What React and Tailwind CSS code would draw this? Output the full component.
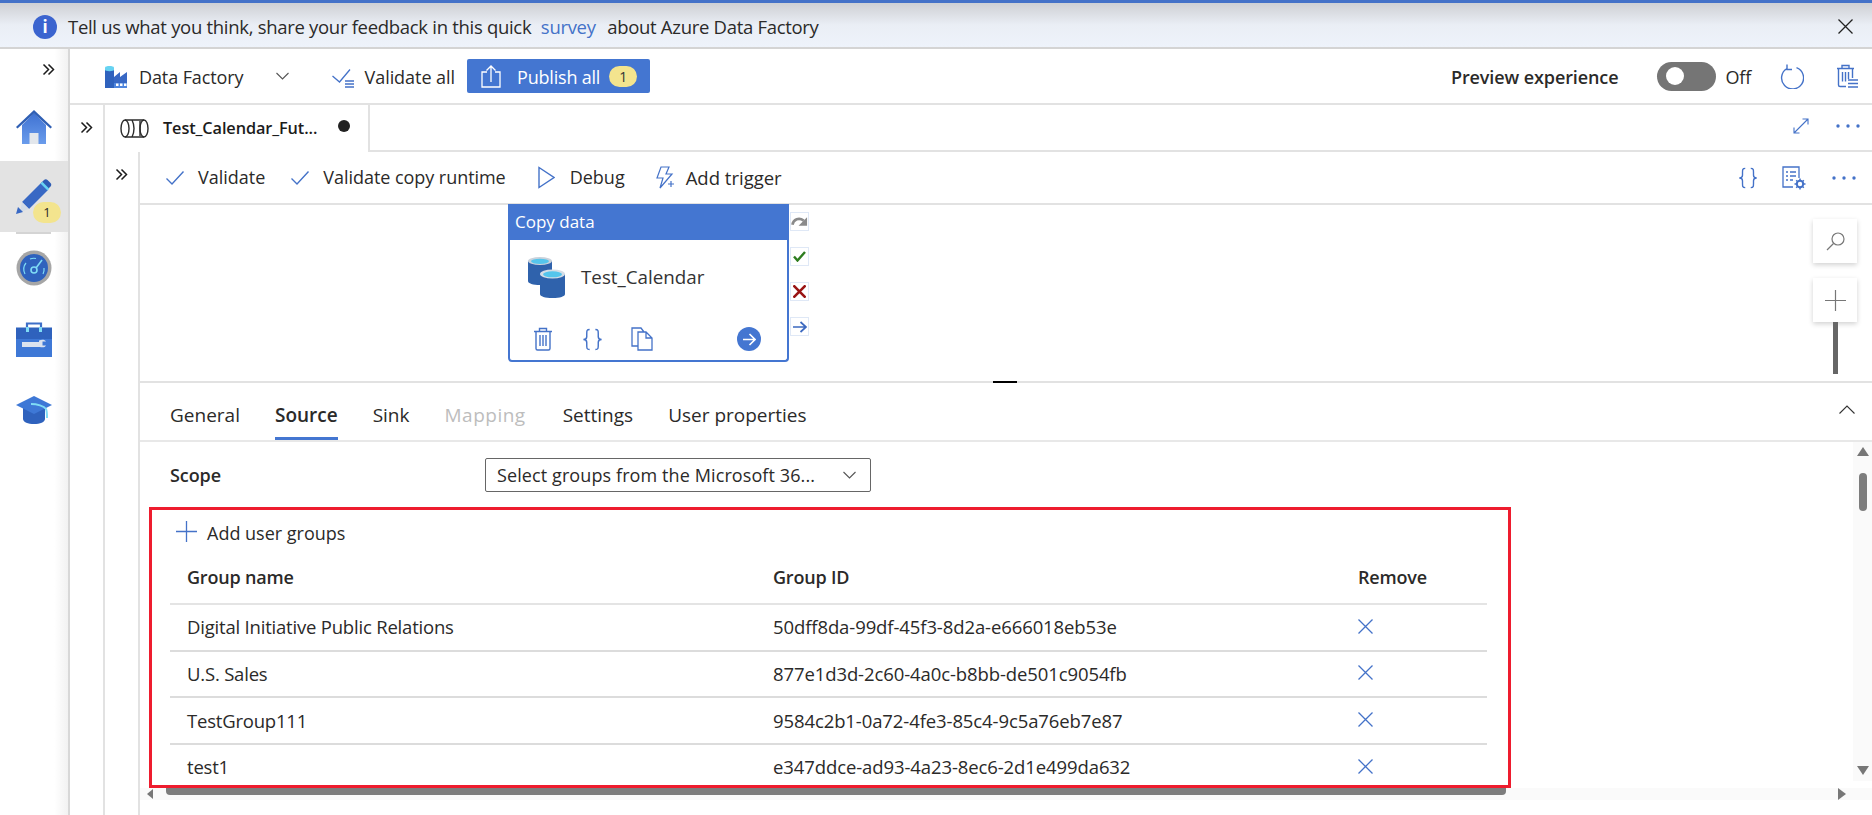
import React from 'react';

const BLUE = '#4472c8';

const Chevrons = ({ className = '' }) => (
  <svg className={className} width="13" height="13" viewBox="0 0 13 13" fill="none" stroke="#1c1c1c" strokeWidth="1.500">
    <path d="M1.500 1.500 6.500 6.500 1.500 11.500M6.500 1.500 11.500 6.500 6.500 11.500" />
  </svg>
);

const Check = () => (
  <svg width="20" height="16" viewBox="0 0 20 16" fill="none" stroke={BLUE} strokeWidth="1.400">
    <path d="M1.500 8.500 7 14 18.500 1.500" />
  </svg>
);

const Braces = ({ size = 22 }) => (
  <svg width={size} height={size} viewBox="0 0 22 24" fill="none" stroke={BLUE} strokeWidth="1.500">
    <path d="M8 1.500C5 1.500 5 3 5 6v3c0 2-1 3-3.500 3C4 12 5 13 5 15v3c0 3 0 4.500 3 4.500M14 1.500c3 0 3 1.500 3 4.500v3c0 2 1 3 3.500 3C18 12 17 13 17 15v3c0 3 0 4.500-3 4.500" />
  </svg>
);

const Dots = () => (
  <svg width="24" height="4" viewBox="0 0 24 4" fill={BLUE}>
    <circle cx="2" cy="2" r="1.700" />
    <circle cx="12" cy="2" r="1.700" />
    <circle cx="22" cy="2" r="1.700" />
  </svg>
);

const Cross = ({ size = 15, color = BLUE, width = 1.300 }) => (
  <svg width={size} height={size} viewBox="0 0 15 15" fill="none" stroke={color} strokeWidth={width}>
    <path d="M.5.5l14 14M14.500.5l-14 14" />
  </svg>
);

const TrashIcon = () => (
  <svg width="20" height="24" viewBox="0 0 20 24" fill="none" stroke={BLUE} strokeWidth="1.400">
    <path d="M1 4.500h18M6.500 4.500V1.500h7v3M3 4.500V21.500c0 1 .6 1.500 1.500 1.500h11c.9 0 1.500-.5 1.500-1.500V4.500M7 8v11M10 8v11M13 8v11" />
  </svg>
);

const TrashListIcon = () => (
  <svg width="22" height="25" viewBox="0 0 22 25" fill="none" stroke={BLUE} strokeWidth="1.400">
    <path d="M1 4.500h17M6 4.500V1.500h7v3M2.500 4.500V21c0 1 .6 1.500 1.500 1.500h6M16.500 4.500V14M6.500 8v9.500M9.500 8v9.500M12.500 8v7" />
    <path d="M12 16h10M12 19.500h10M12 23h10" strokeWidth="1.500" />
  </svg>
);

const SideHome = () => (
  <svg width="36" height="34" viewBox="0 0 36 34">
    <defs>
      <linearGradient id="homeBody" x1="0" y1="0" x2="0" y2="1">
        <stop offset="0" stopColor="#3f72d2" />
        <stop offset="1" stopColor="#6a9cec" />
      </linearGradient>
    </defs>
    <path d="M6 15 18 3 30 15v19H6z" fill="url(#homeBody)" />
    <path d="M18 0 36 17l-1.500 1.500L18 3.500 1.500 18.500 0 17z" fill="#2f5fb4" />
    <path d="M13.500 23h9v11h-9z" fill="#e3e7ec" />
  </svg>
);

const SidePencil = () => (
  <svg width="36" height="36" viewBox="0 0 36 36">
    <path d="M6 24 25 5l7 7-19 19z" fill="#3868c4" />
    <path d="M25 5l3-3c1-1 2.500-1 3.500 0l3 3c1 1 1 2.500 0 3.500l-3 3z" fill="#2d5cb4" />
    <path d="M24.500 5.500l1.800-1.800 7 7-1.800 1.800z" fill="#67d3f2" />
    <path d="M6 24l7 7-9 3z" fill="#d3dbe6" />
    <path d="M0 36l2-7 5 5z" fill="#3868c4" />
  </svg>
);

const SideGauge = () => (
  <svg width="36" height="36" viewBox="0 0 36 36" fill="none">
    <circle cx="18" cy="18" r="17.500" fill="#a6a6a6" />
    <circle cx="18" cy="18" r="14" fill="#2f62bd" />
    <circle cx="18" cy="20" r="3" stroke="#7fdcf5" strokeWidth="1.600" />
    <path d="M20 18l6-8" stroke="#7fdcf5" strokeWidth="1.600" />
    <path d="M9 24c-2-4-1.500-8 1-11M27 24c1-2 1.300-4 1-6M14 9c2-.8 4-1 6-.5" stroke="#7fdcf5" strokeWidth="1.200" />
  </svg>
);

const SideToolbox = () => (
  <svg width="36" height="36" viewBox="0 0 36 36" fill="none">
    <path d="M11 7V2.500h14V7" stroke="#3e6fc8" strokeWidth="2.200" />
    <path d="M0 6.500h36v12H0z" fill="#2f62bd" />
    <path d="M0 18h36v18H0z" fill="#3e78d6" />
    <path d="M10 6h3v5h-3zM23 6h3v5h-3z" fill="#7fdcf5" />
    <path d="M6 21h18v5H6z" fill="#dbe3ee" />
    <path d="M23 19.500c3-1.500 6-1 7 1h-3.500v4H30c-1 2-4 2.500-7 1z" fill="#dbe3ee" />
  </svg>
);

const SideCap = () => (
  <svg width="36" height="28" viewBox="0 0 36 28" fill="none">
    <path d="M7 12h22v11c0 3-5 5-11 5S7 26 7 23z" fill="#2f62bd" />
    <path d="M18 0 36 9 18 18 0 9z" fill="#3e78d6" />
    <path d="M15 8c6 0 13 2 15 5 1 2 1 6 1 9" stroke="#7fdcf5" strokeWidth="2" />
  </svg>
);

const FactoryIcon = () => (
  <svg width="24" height="23" viewBox="0 0 24 23">
    <path d="M1 3h9v20H1z" fill="#2f62bd" />
    <path d="M1 2.500C1 .5 10 .5 10 2.500V5C10 6.500 1 6.500 1 5z" fill="#67d3f2" />
    <path d="M10 12l6-5v5l7-5v16H10z" fill="#3868c4" />
    <path d="M10 18h13v5H10z" fill="#4f86de" />
    <path d="M12 18.500h2.500V21H12zM16 18.500h2.500V21H16zM20 18.500h2.500V21H20z" fill="#fff" />
  </svg>
);

const ValidateAllIcon = () => (
  <svg width="22" height="19" viewBox="0 0 22 19" fill="none" stroke={BLUE} strokeWidth="1.300">
    <path d="M.5 7l7 6L18 .5" />
    <path d="M13 12h9M13 15h9M13 18h9" strokeWidth="1.400" />
  </svg>
);

const ShareIcon = () => (
  <svg width="20" height="24" viewBox="0 0 20 24" fill="none" stroke="#fff" strokeWidth="1.300">
    <path d="M6 8H1v15h18V8h-5M10 18V2M5.500 6.500 10 2l4.500 4.500" />
  </svg>
);

const PipelineIcon = () => (
  <svg width="29" height="19" viewBox="0 0 29 19" fill="none" stroke="#2b2b2b" strokeWidth="1.400">
    <ellipse cx="5" cy="9.500" rx="4" ry="8.500" />
    <path d="M5 1h19M5 18h19M12 1c1.500 3 2 5.500 2 8.500S13.500 15 12 18M20 2v15" />
    <ellipse cx="24" cy="9.500" rx="4" ry="8.500" />
  </svg>
);

const DbIcon = () => (
  <svg width="37" height="41" viewBox="0 0 37 41">
    <path d="M0 4v20c0 2.500 5 4 12 4s12-1.500 12-4V4z" fill="#2f62ac" />
    <ellipse cx="12" cy="4" rx="12" ry="4" fill="#c9d2dc" />
    <ellipse cx="12" cy="4.300" rx="9" ry="2.600" fill="#55c5ec" />
    <path d="M12 17v20c0 2.500 5 4 12.500 4S37 39.500 37 37V17z" fill="#2f62ac" />
    <ellipse cx="24.500" cy="17" rx="12.500" ry="4.500" fill="#d5dde6" />
    <ellipse cx="24.500" cy="17.300" rx="9.500" ry="3" fill="#55c5ec" />
  </svg>
);

const groups = [
  ['Digital Initiative Public Relations', '50dff8da-99df-45f3-8d2a-e666018eb53e'],
  ['U.S. Sales', '877e1d3d-2c60-4a0c-b8bb-de501c9054fb'],
  ['TestGroup111', '9584c2b1-0a72-4fe3-85c4-9c5a76eb7e87'],
  ['test1', 'e347ddce-ad93-4a23-8ec6-2d1e499da632'],
];

const tabs = ['General', 'Source', 'Sink', 'Mapping', 'Settings', 'User properties'];

const OutcomeButton = ({ children }) => (
  <div className="flex h-[19px] w-[19px] items-center justify-center border border-[#dfe8f6] bg-white">{children}</div>
);

export default function App() {
  return (
    <div className="flex h-[815px] w-[1872px] flex-col overflow-hidden bg-white font-['Open_Sans',sans-serif] text-[18px] text-[#2b2a29]">
      {/* Banner */}
      <div className="flex h-[49px] shrink-0 items-center border-t-[3px] border-b-2 border-t-[#4472c8] border-b-[#d4d4d4] bg-linear-to-b from-[#ced0d4] via-[#eaeef5] via-50% to-[#eef3fb] pt-[3px] pr-[19px] pl-[33px]">
        <div className="flex h-[24px] w-[24px] items-center justify-center rounded-full bg-[#3b64cf] text-[17px] font-bold text-white">i</div>
        <div className="ml-[11px] text-[18.500px] tracking-[-0.3px]">
          Tell us what you think, share your feedback in this quick <span className="mr-[7px] ml-[5px] text-[#4472c8]">survey</span> about Azure Data Factory
        </div>
        <div className="ml-auto"><Cross size={15} color="#222" /></div>
      </div>

      <div className="flex min-h-0 flex-1">
        {/* Left nav */}
        <div className="flex w-[70px] shrink-0 flex-col items-center border-r-2 border-[#d8d8d8] bg-linear-to-r from-white from-80% to-[#f2f2f2]">
          <div className="flex h-[40px] w-full items-center justify-end pr-[13px]"><Chevrons /></div>
          <div className="mt-[21px] h-[51px]"><SideHome /></div>
          <div className="relative flex h-[71px] w-full justify-center bg-[#e3e3e3] pt-[17px]">
            <SidePencil />
            <div className="absolute top-[41px] left-[33px] flex h-[21px] w-[28px] items-center justify-center rounded-full bg-[#f3e48e] text-[13px]">1</div>
            <div className="absolute bottom-[-2px] left-[16px] h-[2px] w-[35px] bg-[#d4d4d4]" />
          </div>
          <div className="mt-[18px]"><SideGauge /></div>
          <div className="mt-[35px]"><SideToolbox /></div>
          <div className="mt-[39px]"><SideCap /></div>
        </div>

        <div className="flex min-w-0 flex-1 flex-col">
          {/* Factory toolbar */}
          <div className="flex h-[56px] shrink-0 items-center border-b-2 border-[#e2e2e2] pr-[14px] pl-[34px]">
            <FactoryIcon />
            <span className="ml-[11px] translate-y-[1px] tracking-[-0.1px]">Data Factory</span>
            <svg className="ml-[32px]" width="13" height="8" viewBox="0 0 13 8" fill="none" stroke="#555" strokeWidth="1.100"><path d="M.5 1 6.500 7 12.500 1" /></svg>
            <div className="ml-[43px] translate-y-[2px]"><ValidateAllIcon /></div>
            <span className="ml-[11px] translate-y-[1px] tracking-[-0.05px]">Validate all</span>
            <div className="ml-[12px] flex h-[34px] w-[183px] items-center rounded-[2px] bg-[#4476d1] pl-[14px] text-white">
              <ShareIcon />
              <span className="ml-[16px] translate-y-[1px] tracking-[-0.2px]">Publish all</span>
              <span className="ml-[9px] flex h-[21px] w-[28px] items-center justify-center rounded-full bg-[#f3e48e] text-[14px] text-[#333]">1</span>
            </div>
            <span className="ml-auto translate-y-[1px] font-semibold tracking-[-0.1px]">Preview experience</span>
            <div className="ml-[39px] flex h-[29px] w-[59px] items-center rounded-full bg-[#757575] pl-[9px]">
              <div className="h-[18px] w-[18px] rounded-full bg-white" />
            </div>
            <span className="ml-[9px] translate-y-[1px] tracking-[-0.2px]">Off</span>
            <svg className="ml-[29px]" width="24" height="25" viewBox="0 0 24 25" fill="none" stroke={BLUE} strokeWidth="1.400">
              <path d="M7 4.500a11 11 0 1 0 9.500-.8M7 .5v5h5" />
            </svg>
            <div className="ml-[32px]"><TrashListIcon /></div>
          </div>

          <div className="flex min-h-0 flex-1">
            <div className="flex w-[35px] shrink-0 justify-center border-r-2 border-[#e2e2e2] pt-[16px]"><Chevrons /></div>
            <div className="flex min-w-0 flex-1 flex-col">
              {/* Pipeline tab */}
              <div className="flex h-[47px] shrink-0">
                <div className="flex w-[265px] items-center border-r-2 border-[#e2e2e2] pl-[15px]">
                  <PipelineIcon />
                  <span className="ml-[14px] text-[16.300px] font-semibold tracking-[-0.1px] text-[#1c1c1c]">Test_Calendar_Fut...</span>
                  <span className="ml-[21px] h-[12px] w-[12px] -translate-y-[3px] rounded-full bg-[#222]" />
                </div>
                <div className="flex flex-1 items-center justify-end gap-[27px] border-b-2 border-[#e2e2e2] pr-[12px] pb-[3px]">
                  <svg width="16" height="16" viewBox="0 0 16 16" fill="none" stroke={BLUE} strokeWidth="1.100"><path d="M1 15 15 1M9.500 1H15v5.500M1 9.500V15h5.500" /></svg>
                  <Dots />
                </div>
              </div>

              <div className="flex min-h-0 flex-1">
                <div className="flex w-[35px] shrink-0 justify-center border-r-2 border-[#e2e2e2] pt-[16px]"><Chevrons /></div>
                <div className="flex min-w-0 flex-1 flex-col">
                  {/* Pipeline toolbar */}
                  <div className="flex h-[53px] shrink-0 items-center border-b-2 border-[#e2e2e2] pr-[16px] pl-[25px]">
                    <Check />
                    <span className="ml-[13px]">Validate</span>
                    <div className="ml-[25px]"><Check /></div>
                    <span className="ml-[13px] tracking-[-0.05px]">Validate copy runtime</span>
                    <svg className="ml-[32px]" width="17" height="23" viewBox="0 0 17 23" fill="none" stroke={BLUE} strokeWidth="1.400"><path d="M1 1.500v20L16 11.500z" /></svg>
                    <span className="ml-[15px]">Debug</span>
                    <svg className="ml-[30px]" width="20" height="23" viewBox="0 0 20 23" fill="none" stroke={BLUE} strokeWidth="1.200"><path d="M6 1h8l-3 7h6L5 22l3-10H2zM16 15v6M13 18h6" /></svg>
                    <span className="ml-[11px] text-[18.500px]">Add trigger</span>
                    <div className="ml-auto"><Braces size={22} /></div>
                    <svg className="ml-[23px]" width="24" height="24" viewBox="0 0 24 24" fill="none" stroke={BLUE} strokeWidth="1.300">
                      <path d="M17 12V1H1v20h10M4 6h2M8 6h6M4 10h2M8 10h6M4 14h2M8 14h3" />
                      <circle cx="18" cy="18" r="3.200" strokeWidth="2" />
                      <path d="M18 12.500v2.500M18 21v2.500M12.500 18h2.500M21 18h2.500M14.200 14.200l1.500 1.500M20.300 20.300l1.500 1.500M14.200 21.800l1.500-1.500M20.300 15.700l1.500-1.500" strokeWidth="1.500" />
                    </svg>
                    <div className="ml-[26px]"><Dots /></div>
                  </div>

                  {/* Canvas */}
                  <div className="relative h-[178px] shrink-0 border-b-2 border-[#e2e2e2]">
                    <div className="absolute top-[-1px] left-[368px] flex h-[158px] w-[281px] flex-col overflow-hidden rounded-b-[4px] border-2 border-t-0 border-[#4476d1]">
                      <div className="flex h-[36px] shrink-0 items-center bg-[#4476d1] pl-[5px] text-[17px] text-white">Copy data</div>
                      <div className="flex items-center pt-[17px] pl-[18px]">
                        <DbIcon />
                        <span className="ml-[16px] text-[18.800px] text-[#333]">Test_Calendar</span>
                      </div>
                      <div className="mt-[29px] flex items-center pl-[23px]">
                        <TrashIcon />
                        <div className="ml-[28px]"><Braces size={23} /></div>
                        <svg className="ml-[27px]" width="22" height="24" viewBox="0 0 22 24" fill="none" stroke={BLUE} strokeWidth="1.300">
                          <path d="M7 19H1V1h9l3 4M7 5h8l6 6v12H7zM15 5v6h6" />
                        </svg>
                        <div className="ml-[84px] flex h-[24px] w-[24px] items-center justify-center rounded-full bg-[#4476d1]">
                          <svg width="14" height="13" viewBox="0 0 14 13" fill="none" stroke="#fff" strokeWidth="1.600"><path d="M1 6.500h12M7.500 1 13 6.500 7.500 12" /></svg>
                        </div>
                      </div>
                    </div>

                    <div className="absolute top-[7px] left-[650px] flex flex-col gap-[16px]">
                      <OutcomeButton>
                        <svg width="18" height="13" viewBox="0 0 18 13" fill="none" stroke="#8a8a8a" strokeWidth="2.800"><path d="M1.500 10c1-6 7-8 12-4.500" /><path d="M17 2v9H8z" fill="#8a8a8a" stroke="none" /></svg>
                      </OutcomeButton>
                      <OutcomeButton>
                        <svg width="13" height="11" viewBox="0 0 13 11" fill="none" stroke="#2e7d1f" strokeWidth="2.400"><path d="M1 5.500 4.500 9.500 12 1" /></svg>
                      </OutcomeButton>
                      <OutcomeButton><Cross size={13} color="#9a1414" width={3} /></OutcomeButton>
                      <OutcomeButton>
                        <svg width="14" height="12" viewBox="0 0 14 12" fill="none" stroke="#3c69c0" strokeWidth="1.700"><path d="M0 6h13M7.500 1 13 6 7.500 11" /></svg>
                      </OutcomeButton>
                    </div>

                    <div className="absolute top-[14px] right-[15px] flex flex-col items-center">
                      <div className="flex h-[44px] w-[44px] items-center justify-center bg-white shadow-[0_2px_5px_rgba(0,0,0,0.18)]">
                        <svg width="19" height="19" viewBox="0 0 19 19" fill="none" stroke="#777" strokeWidth="1.200"><circle cx="12" cy="7" r="6" /><path d="M7.500 11.500 1 18" /></svg>
                      </div>
                      <div className="mt-[15px] flex h-[44px] w-[44px] items-center justify-center bg-white shadow-[0_2px_5px_rgba(0,0,0,0.18)]">
                        <svg width="21" height="21" viewBox="0 0 21 21" fill="none" stroke="#777" strokeWidth="1.200"><path d="M10.500 0v21M0 10.500h21" /></svg>
                      </div>
                      <div className="h-[52px] w-[5px] bg-[#666]" />
                    </div>

                    <div className="absolute -bottom-[2px] left-[853px] h-[2px] w-[24px] bg-black" />
                  </div>

                  {/* Bottom panel */}
                  <div className="flex h-[59px] shrink-0 items-stretch border-b-2 border-[#e8e8e8] pl-[30px] text-[19px]">
                    <div className="flex gap-[35px]">
                      {tabs.map((t) => (
                        <div
                          key={t}
                          className={
                            t === 'Source'
                              ? 'flex items-center border-b-[3px] border-[#4476d1] pt-[11px] font-semibold'
                              : t === 'Mapping'
                                ? 'mr-[2px] flex items-center border-b-[3px] border-transparent pt-[11px] tracking-[0.5px] text-[#bdbdbd]'
                                : 'flex items-center border-b-[3px] border-transparent pt-[11px]'
                          }
                        >
                          {t}
                        </div>
                      ))}
                    </div>
                    <div className="ml-auto flex items-center pr-[17px] pb-[5px]">
                      <svg width="16" height="9" viewBox="0 0 16 9" fill="none" stroke="#333" strokeWidth="1.100"><path d="M.5 8.500 8 1l7.500 7.500" /></svg>
                    </div>
                  </div>

                  <div className="flex h-[346px] shrink-0">
                    <div className="min-w-0 flex-1">
                      <div className="flex items-center pt-[16px] pl-[30px]">
                        <span className="w-[315px] font-semibold tracking-[-0.1px]">Scope</span>
                        <div className="flex h-[34px] w-[386px] items-center justify-between rounded-[2px] border border-[#666] pr-[14px] pl-[11px] tracking-[0.1px]">
                          <span>Select groups from the Microsoft 36...</span>
                          <svg width="13" height="8" viewBox="0 0 13 8" fill="none" stroke="#555" strokeWidth="1.100"><path d="M.5 1 6.500 7 12.500 1" /></svg>
                        </div>
                      </div>

                      {/* Highlighted user groups */}
                      <div className="mt-[15px] ml-[9px] h-[281px] w-[1362px] overflow-hidden border-[3px] border-[#ee1c2e] pl-[18px]">
                        <div className="flex h-[42px] items-center pl-[6px]">
                          <svg width="21" height="21" viewBox="0 0 21 21" fill="none" stroke={BLUE} strokeWidth="1.300"><path d="M10.500 0v21M0 10.500h21" /></svg>
                          <span className="ml-[10px] translate-y-[2px]">Add user groups</span>
                        </div>
                        <div className="w-[1317px]">
                          <div className="grid h-[53px] grid-cols-[586px_585px_1fr] items-center border-b-2 border-[#e4e4e4] pl-[17px] font-semibold tracking-[-0.2px]">
                            <span>Group name</span>
                            <span>Group ID</span>
                            <span>Remove</span>
                          </div>
                          {groups.map(([name, id]) => (
                            <div key={id} className="grid h-[46.660px] grid-cols-[586px_585px_1fr] items-center border-b-2 border-[#dcdcdc] pl-[17px] text-[18.500px]">
                              <span className="tracking-[-0.2px]">{name}</span>
                              <span className="tracking-[-0.1px]">{id}</span>
                              <span className="-translate-y-[1px]"><Cross /></span>
                            </div>
                          ))}
                        </div>
                      </div>
                    </div>

                    {/* Vertical scrollbar */}
                    <div className="flex h-[339px] w-[19px] flex-col items-center bg-[#fafafa] pt-[5px]">
                      <div className="h-0 w-0 border-x-[6px] border-b-[9px] border-x-transparent border-b-[#777]" />
                      <div className="mt-[17px] h-[38px] w-[8px] rounded-full bg-[#7d7d7d]" />
                      <div className="mt-auto mb-[6px] h-0 w-0 border-x-[6px] border-t-[9px] border-x-transparent border-t-[#777]" />
                    </div>
                  </div>

                  {/* Horizontal scrollbar */}
                  <div className="flex h-[12px] shrink-0 items-start bg-[#fafafa] pl-[7px]">
                    <div className="mt-[1px] h-0 w-0 border-y-[5px] border-r-[6px] border-y-transparent border-r-[#777]" />
                    <div className="ml-[13px] h-[7px] w-[1340px] rounded-b-[4px] bg-[#7d7d7d]" />
                    <div className="ml-[332px] h-0 w-0 border-y-[6px] border-l-[8px] border-y-transparent border-l-[#777]" />
                  </div>
                </div>
              </div>
            </div>
          </div>
        </div>
      </div>
    </div>
  );
}
